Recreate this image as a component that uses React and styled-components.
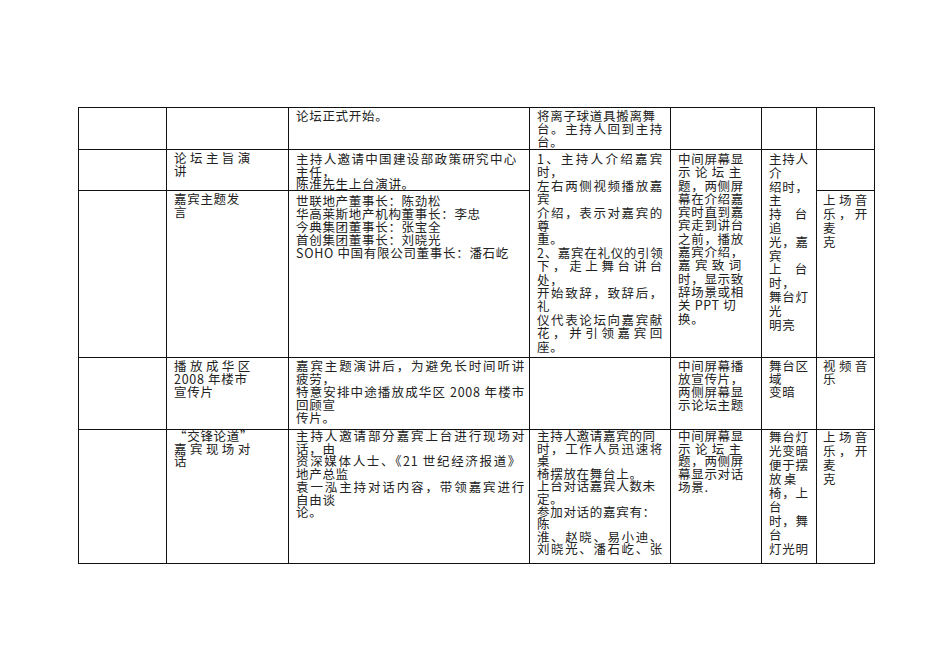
import React from "react";
import styled, { createGlobalStyle } from "styled-components";

const GlobalStyle = createGlobalStyle`
  html, body {
    margin: 0;
    background: #fff;
  }
  body {
    font-family: "Noto Sans CJK SC", "Noto Sans", sans-serif;
    color: #222;
  }
`;

const Page = styled.div`
  padding: 107px 0 0 78px;
`;

const Table = styled.div`
  display: grid;
  grid-template-columns: 87px 121px 240px 140px 90px 54px 57px;
  grid-template-rows: 41px 40px 166px 71px 133px;
  gap: 1px;
  padding: 1px;
  width: max-content;
  background: #111;
`;

// per column: left padding, right padding (sets the justified width), line height
const COLS = [
  { pl: 7, pr: 4, lh: 12.8 },
  { pl: 7, pr: 37, lh: 12.8 },
  { pl: 7, pr: 4, lh: 12.8 },
  { pl: 7, pr: 7, lh: 13 },
  { pl: 7, pr: 19, lh: 13.1 },
  { pl: 7, pr: 8, lh: 13.8 },
  { pl: 6, pr: 6, lh: 13.9 },
];

const Cell = styled.div`
  background: #fff;
  grid-column: ${(p) => p.$c};
  grid-row: ${(p) => (p.$span ? `${p.$r} / span ${p.$span}` : p.$r)};
  padding: ${(p) => p.$pt}px ${(p) => COLS[p.$c - 1].pr}px 0
    ${(p) => COLS[p.$c - 1].pl}px;
  font-size: 12.5px;
  line-height: ${(p) => p.$lh}px;
  letter-spacing: 0.7px;
`;

const Line = styled.div`
  white-space: pre;
  width: ${(p) => (p.$w ? `${p.$w}px` : "auto")};
  text-align: ${(p) => (p.$j ? "justify" : "left")};
  text-align-last: ${(p) => (p.$j ? "justify" : "auto")};
`;

function Lines({ items }) {
  return items.map((it, i) => {
    if (typeof it === "object") {
      return (
        <Line key={i} $j $w={it.w}>
          {it.t}
        </Line>
      );
    }
    if (it.startsWith("~")) {
      return (
        <Line key={i} $j>
          {it.slice(1)}
        </Line>
      );
    }
    return <Line key={i}>{it}</Line>;
  });
}

// [row, col, span, paddingTop, lines, lineHeight?]
const cells = [
  [1, 1, 0, 2, []],
  [1, 2, 0, 2, []],
  [1, 3, 0, 2, ["论坛正式开始。"]],
  [1, 4, 0, 2, ["将离子球道具搬离舞", "~台。主持人回到主持", "台。"], 12.8],
  [1, 5, 0, 2, []],
  [1, 6, 0, 2, []],
  [1, 7, 0, 2, []],

  [2, 1, 0, 2, []],
  [2, 2, 0, 2, ["~论坛主旨演", "讲"]],
  [
    2,
    3,
    0,
    3,
    [{ t: "主持人邀请中国建设部政策研究中心", w: 221 }, "主任，", "陈淮先生上台演讲。"],
    12.6,
  ],
  [
    2,
    4,
    2,
    2,
    [
      "~1、主持人介绍嘉宾",
      "时，",
      "~左右两侧视频播放嘉",
      "宾",
      "~介绍，表示对嘉宾的",
      "尊",
      "重。",
      "~2、嘉宾在礼仪的引领",
      "~下，走上舞台讲台",
      "处，",
      "~开始致辞，致辞后，",
      "礼",
      "~仪代表论坛向嘉宾献",
      "~花，并引领嘉宾回",
      "座。",
    ],
    13.4,
  ],
  [
    2,
    5,
    2,
    2,
    [
      "中间屏幕显",
      "~示论坛主",
      "题，两侧屏",
      "幕在介绍嘉",
      "宾时直到嘉",
      "宾走到讲台",
      "之前，播放",
      "嘉宾介绍，",
      "~嘉宾致词",
      "时，显示致",
      "辞场景或相",
      "关 PPT 切",
      "换。",
    ],
    13.3,
  ],
  [
    2,
    6,
    2,
    2,
    [
      "主持人",
      "介",
      "绍时，",
      "主",
      "~持台",
      "追",
      "~光，嘉",
      "宾",
      "~上台",
      "时，",
      "舞台灯",
      "光",
      "明亮",
    ],
  ],
  [2, 7, 0, 2, []],

  [3, 1, 0, 2, []],
  [3, 2, 0, 2, ["嘉宾主题发", "言"]],
  [
    3,
    3,
    0,
    3,
    [
      "世联地产董事长：陈劲松",
      "华高莱斯地产机构董事长：李忠",
      "今典集团董事长：张宝全",
      "首创集团董事长：刘晓光",
      "SOHO 中国有限公司董事长：潘石屹",
    ],
    13,
  ],
  [3, 7, 0, 2, ["~上场音", "~乐，开", "麦", "克"]],

  [4, 1, 0, 1, []],
  [4, 2, 0, 1, ["~播放成华区", "2008 年楼市", "宣传片"], 13],
  [
    4,
    3,
    0,
    1,
    [
      "~嘉宾主题演讲后，为避免长时间听讲",
      "疲劳，",
      "~特意安排中途播放成华区 2008 年楼市",
      "回顾宣",
      "传片。",
    ],
    13,
  ],
  [4, 4, 0, 1, []],
  [4, 5, 0, 1, ["中间屏幕播", "放宣传片，", "两侧屏幕显", "示论坛主题"], 13],
  [4, 6, 0, 1, ["~舞台区", "域", "变暗"], 13],
  [4, 7, 0, 1, ["~视频音", "乐"], 13],

  [5, 1, 0, 0, []],
  [5, 2, 0, 0, ["“交锋论道”", "~嘉宾现场对", "话"], 12.6],
  [
    5,
    3,
    0,
    0,
    [
      "~主持人邀请部分嘉宾上台进行现场对",
      "话，由",
      { t: "资深媒体人士、《21 世纪经济报道》", w: 225 },
      "地产总监",
      "~袁一泓主持对话内容，带领嘉宾进行",
      "自由谈",
      "论。",
    ],
    12.7,
  ],
  [
    5,
    4,
    0,
    0,
    [
      "主持人邀请嘉宾的同",
      "~时，工作人员迅速将",
      "桌",
      "椅摆放在舞台上。",
      "上台对话嘉宾人数未",
      "定。",
      "参加对话的嘉宾有：",
      "陈",
      "~淮、赵晓、易小迪、",
      "~刘晓光、潘石屹、张",
    ],
    12.6,
  ],
  [5, 5, 0, 0, ["中间屏幕显", "~示论坛主", "题，两侧屏", "幕显示对话", "场景."], 12.7],
  [
    5,
    6,
    0,
    0,
    [
      "舞台灯",
      "光变暗",
      "便于摆",
      { t: "放桌", w: 28 },
      "~椅，上",
      "台",
      "~时，舞",
      "台",
      "~灯光明",
    ],
    14,
  ],
  [5, 7, 0, 0, ["~上场音", "~乐，开", "麦", "克"], 14],
];

export default function App() {
  return (
    <>
      <GlobalStyle />
      <Page>
        <Table>
          {cells.map(([r, c, span, pt, lines, lh]) => (
            <Cell
              key={`${r}-${c}`}
              $r={r}
              $c={c}
              $span={span}
              $pt={pt}
              $lh={lh ?? COLS[c - 1].lh}
            >
              <Lines items={lines} />
            </Cell>
          ))}
        </Table>
      </Page>
    </>
  );
}
